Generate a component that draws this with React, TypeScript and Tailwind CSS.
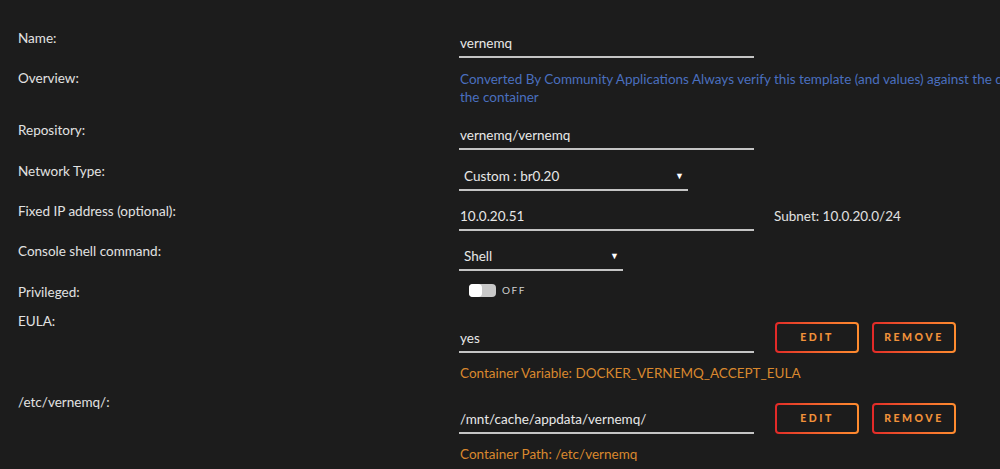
import React from "react";

const font = { fontFamily: "Lato, 'Liberation Sans', sans-serif" };

const Underlined: React.FC<{ value: string; width?: string; arrow?: boolean }> = ({ value, width = "w-[295px]", arrow }) => (
	<div className={width}>
		<div className={`flex items-center justify-between leading-[20px] text-[13.5px] text-[#e8e8e8] ${arrow ? "pl-[5px] pr-[4px]" : "pl-[1px]"}`}>
			<span>{value}</span>
			{arrow && <span className="text-[9px] text-white">▼</span>}
		</div>
		<div className="mt-[3px] h-[2px] bg-[#c4c4c4]" />
	</div>
);

const GradientButton: React.FC<{ label: string; width: string }> = ({ label, width }) => (
	<div className={`${width} h-[31px] rounded-[4px] p-[2px] bg-gradient-to-r from-[#e22828] to-[#ff8c2f]`}>
		<div className="flex h-full w-full items-center justify-center rounded-[2px] bg-[#1c1c1c] text-[10.5px] font-black tracking-[2.5px] text-[#f0913a]">
			{label}
		</div>
	</div>
);

const Row: React.FC<{ label: string; height: string; children: React.ReactNode }> = ({ label, height, children }) => (
	<div className={`flex ${height}`}>
		<div className="w-[441px] shrink-0 leading-[20px] text-[13.5px] text-[#e2e2e2]">{label}</div>
		<div className="flex-1">{children}</div>
	</div>
);

const App: React.FC = () => {
	return (
		<div className="h-[469px] w-[1000px] overflow-hidden bg-[#1c1c1c] pl-[18px] pt-[28px]" style={font}>
			<Row label="Name:" height="h-[40px]">
				<div className="pt-[5px]">
					<Underlined value="vernemq" />
				</div>
			</Row>
			<Row label="Overview:" height="h-[52px]">
				<div className="whitespace-nowrap pt-[2px] pl-[1px] text-[13.5px] leading-[18px] text-[#4a6fbf]">
					Converted By Community Applications Always verify this template (and values) against the dockerhub support page for
					<br />
					the container
				</div>
			</Row>
			<Row label="Repository:" height="h-[41px]">
				<div className="pt-[5px]">
					<Underlined value="vernemq/vernemq" />
				</div>
			</Row>
			<Row label="Network Type:" height="h-[40px]">
				<div className="pt-[5px]">
					<Underlined value="Custom : br0.20" width="w-[229px]" arrow />
				</div>
			</Row>
			<Row label="Fixed IP address (optional):" height="h-[40px]">
				<div className="flex items-start gap-[20px] pt-[5px]">
					<Underlined value="10.0.20.51" />
					<span className="leading-[20px] text-[13.5px] text-[#e2e2e2]">Subnet: 10.0.20.0/24</span>
				</div>
			</Row>
			<Row label="Console shell command:" height="h-[41px]">
				<div className="pt-[5px]">
					<Underlined value="Shell" width="w-[164px]" arrow />
				</div>
			</Row>
			<Row label="Privileged:" height="h-[29px]">
				<div className="flex items-center gap-[6px] pl-[10px] pt-[1px]">
					<div className="flex h-[13px] w-[27px] items-center rounded-[4px] bg-[#c8c8c8]">
						<div className="h-[13px] w-[13px] rounded-[4px] bg-white" />
					</div>
					<span className="text-[10px] tracking-[1.5px] text-[#cfcfcf]">OFF</span>
				</div>
			</Row>
			<Row label="EULA:" height="h-[81px]">
				<div className="flex items-start gap-[21px]">
					<div className="pt-[17px]">
						<Underlined value="yes" />
					</div>
					<div className="mt-[11px] flex gap-[13px]">
						<GradientButton label="EDIT" width="w-[84px]" />
						<GradientButton label="REMOVE" width="w-[84px]" />
					</div>
				</div>
				<div className="mt-[10px] pl-[1px] text-[13.5px] leading-[20px] text-[#d9882e]">
					Container Variable: DOCKER_VERNEMQ_ACCEPT_EULA
				</div>
			</Row>
			<Row label="/etc/vernemq/:" height="h-[77px]">
				<div className="flex items-start gap-[21px]">
					<div className="pt-[17px]">
						<Underlined value="/mnt/cache/appdata/vernemq/" />
					</div>
					<div className="mt-[11px] flex gap-[13px]">
						<GradientButton label="EDIT" width="w-[84px]" />
						<GradientButton label="REMOVE" width="w-[84px]" />
					</div>
				</div>
				<div className="mt-[10px] pl-[1px] text-[13.5px] leading-[20px] text-[#d9882e]">
					Container Path: /etc/vernemq
				</div>
			</Row>
		</div>
	);
};

export default App;
